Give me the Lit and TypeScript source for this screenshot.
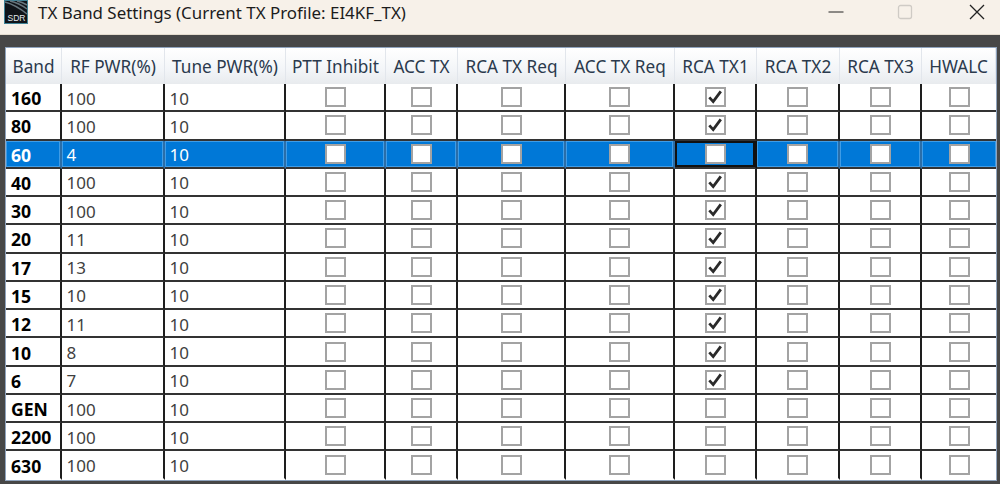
import { LitElement, html, css } from "lit";
import { customElement } from "lit/decorators.js";

const HEADERS = ["Band", "RF PWR(%)", "Tune PWR(%)", "PTT Inhibit", "ACC TX", "RCA TX Req", "ACC TX Req", "RCA TX1", "RCA TX2", "RCA TX3", "HWALC"];
const ROWS: [string, string, boolean][] = [
  ["160", "100", true], ["80", "100", true], ["60", "4", false], ["40", "100", true],
  ["30", "100", true], ["20", "11", true], ["17", "13", true], ["15", "10", true],
  ["12", "11", true], ["10", "8", true], ["6", "7", true], ["GEN", "100", false],
  ["2200", "100", false], ["630", "100", false],
];

@customElement("app-root")
export class AppRoot extends LitElement {
  static styles = css`
    :host { display: block; width: 1000px; height: 484px; overflow: hidden; background: #474747; font-family: "Noto Sans", "Open Sans", sans-serif; }
    .title { height: 34px; background: #f7f1e9; border-bottom: 1px solid #e4dccf; display: flex; align-items: center; padding-left: 4px; color: #1c1c1c; box-sizing: content-box; }
    .logo { width: 24px; height: 24px; margin-right: 10px; flex: none; margin-top: -10px; }
    .title-text { font-size: 16.9px; flex: 1; margin-top: -10px; white-space: nowrap; }
    .ctl { width: 16px; height: 16px; display: flex; align-items: center; justify-content: center; margin-top: -10px; flex: none; }
    .ctl.max { margin: -10px 56px 0 53px; }
    .ctl.close { margin-right: 15px; }
    .body { padding: 13px 3px 0 6px; }
    .grid { display: grid; grid-template-columns: 56px 103px 121px 100px 72px 108px 109px 82px 83px 82px 74px; grid-template-rows: 36px repeat(14, 28.27px); background: #fff; width: 989px; box-shadow: 0 0 0 1px #8fa3bd, 1px 0 0 1px #8fa3bd; }
    .h { background: linear-gradient(#ffffff, #f3f5f8 60%, #e8ebee); border-right: 1px solid #e2e6ec; color: #2b3a4d; font-size: 17.2px; display: flex; align-items: center; justify-content: center; white-space: nowrap; box-sizing: border-box; }
    .c { border-right: 2px solid #1e1e1e; border-bottom: 2px solid #333; background: #fff; font-size: 17px; color: #3f3f3f; display: flex; align-items: center; box-sizing: border-box; padding: 2px 0 0 4.5px; white-space: nowrap; overflow: hidden; }
    .c.band { font-weight: 700; color: #000; padding-left: 5px; font-size: 17.6px; }
    .c.chk { justify-content: center; padding: 0; }
    .c.last { border-right: 0; }
    .c.end { border-bottom-color: #fff; }
    .c.sel { background: #0078d7; color: #fff; box-shadow: inset 0 0 0 1px #3f9ce6; border-right-color: #2b6ea8; }
    .c.sel.focus { box-shadow: inset 0 0 0 2px #111; border-right-color: #111; }
    .box { width: 21px; height: 20px; border: 2px solid #a3a3a3; box-sizing: border-box; background: #fff; display: flex; align-items: center; justify-content: center; }
    .box svg { display: block; }
  `;

  private box(checked: boolean) {
    return html`<div class="box">${checked ? html`<svg width="16" height="16" viewBox="0 0 16 16"><path d="M2.3 8.4 L6.2 12.6 L13.8 2.4" fill="none" stroke="#2a2a2a" stroke-width="2.8"/></svg>` : ""}</div>`;
  }

  render() {
    return html`
      <div class="title">
        <svg class="logo" viewBox="0 0 24 24">
          <rect x="0.5" y="0.5" width="23" height="23" fill="#101419" stroke="#3f8296"/>
          <path d="M1 2 Q12 5 23 14 M6 1 Q15 3 23 9 M13 1 Q18 2 23 5" fill="none" stroke="#66757d" stroke-width="1.5"/>
          <text x="12.5" y="21" font-size="8.5" fill="#e4eaee" text-anchor="middle" font-family="Liberation Sans">SDR</text>
        </svg>
        <div class="title-text">TX Band Settings (Current TX Profile: EI4KF_TX)</div>
        <div class="ctl min"><svg width="16" height="16" viewBox="0 0 16 16"><path d="M0.5 8H15.5" stroke="#222" stroke-width="1"/></svg></div>
        <div class="ctl max"><svg width="16" height="16" viewBox="0 0 16 16"><rect x="1.5" y="1.5" width="13" height="13" rx="2" fill="none" stroke="#cfcbc5" stroke-width="1.3"/></svg></div>
        <div class="ctl close"><svg width="16" height="16" viewBox="0 0 16 16"><path d="M1 1L15 15M15 1L1 15" stroke="#222" stroke-width="1.3"/></svg></div>
      </div>
      <div class="body">
        <div class="grid">
          ${HEADERS.map((h) => html`<div class="h">${h}</div>`)}
          ${ROWS.map(([band, rf, on], r) => {
            const s = r === 2 ? "sel" : r === 13 ? "end" : "";
            return html`
              <div class="c band ${s}">${band}</div>
              <div class="c ${s}">${rf}</div>
              <div class="c ${s}">10</div>
              ${[3, 4, 5, 6, 7, 8, 9, 10].map((i) => html`<div class="c chk ${s} ${r === 2 && i === 7 ? "focus" : ""} ${i === 10 ? "last" : ""}">${this.box(i === 7 && on)}</div>`)}
            `;
          })}
        </div>
      </div>
    `;
  }
}
